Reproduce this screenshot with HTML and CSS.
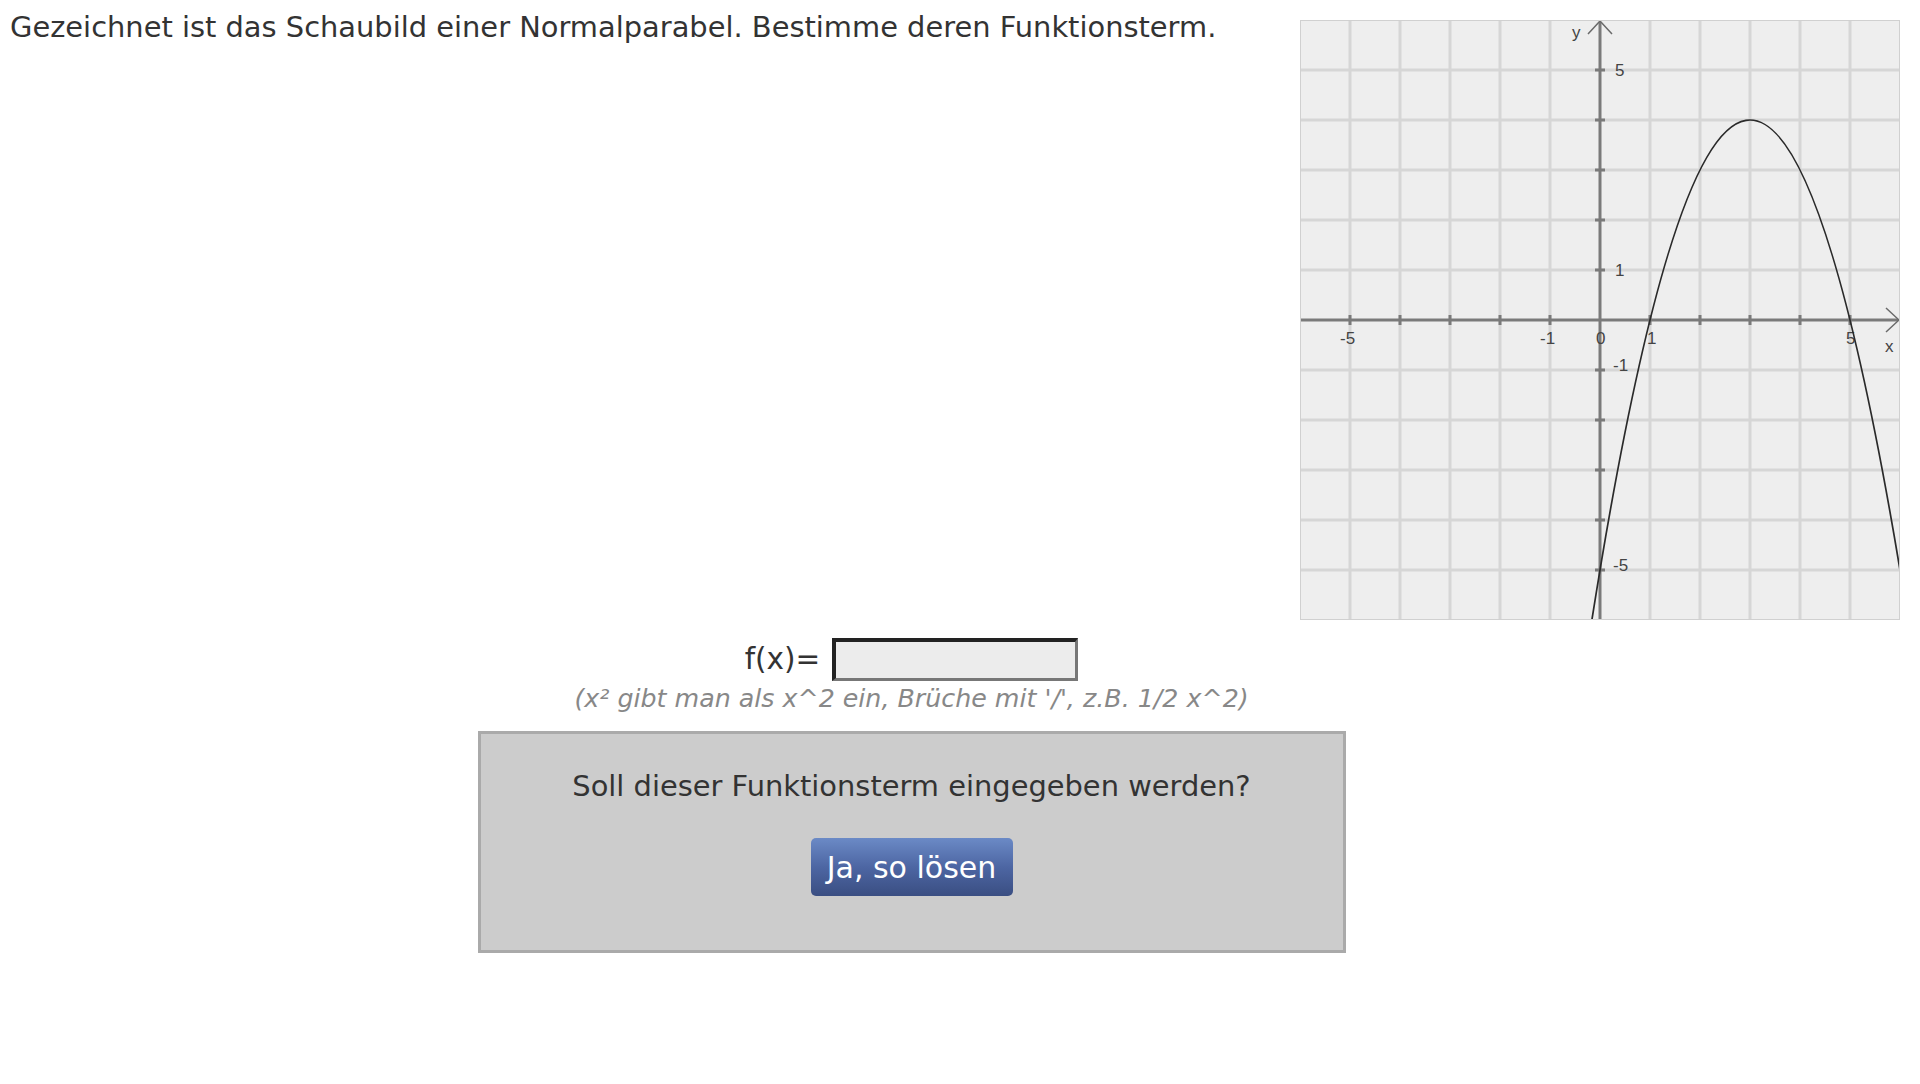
FILE: index.html
```html
<!DOCTYPE html>
<html lang="de">
<head>
<meta charset="utf-8">
<title>Normalparabel</title>
<link rel="stylesheet" href="styles.css">
</head>
<body>
<div class="page">
  <div class="top">
    <p class="task">Gezeichnet ist das Schaubild einer Normalparabel. Bestimme deren Funktionsterm.</p>
    <div class="graph">
      <svg width="600" height="600" viewBox="0 0 600 600" xmlns="http://www.w3.org/2000/svg">
        <rect x="0" y="0" width="600" height="600" fill="#eeeeee"/>
        <g stroke="#d6d6d6" stroke-width="3">
          <line x1="50" y1="0" x2="50" y2="600"/>
          <line x1="100" y1="0" x2="100" y2="600"/>
          <line x1="150" y1="0" x2="150" y2="600"/>
          <line x1="200" y1="0" x2="200" y2="600"/>
          <line x1="250" y1="0" x2="250" y2="600"/>
          <line x1="350" y1="0" x2="350" y2="600"/>
          <line x1="400" y1="0" x2="400" y2="600"/>
          <line x1="450" y1="0" x2="450" y2="600"/>
          <line x1="500" y1="0" x2="500" y2="600"/>
          <line x1="550" y1="0" x2="550" y2="600"/>
          <line x1="0" y1="50" x2="600" y2="50"/>
          <line x1="0" y1="100" x2="600" y2="100"/>
          <line x1="0" y1="150" x2="600" y2="150"/>
          <line x1="0" y1="200" x2="600" y2="200"/>
          <line x1="0" y1="250" x2="600" y2="250"/>
          <line x1="0" y1="350" x2="600" y2="350"/>
          <line x1="0" y1="400" x2="600" y2="400"/>
          <line x1="0" y1="450" x2="600" y2="450"/>
          <line x1="0" y1="500" x2="600" y2="500"/>
          <line x1="0" y1="550" x2="600" y2="550"/>
        </g>
        <g stroke="#7a7a7a" stroke-width="3">
          <line x1="0" y1="300" x2="598" y2="300"/>
          <line x1="300" y1="2" x2="300" y2="600"/>
        </g>
        <g stroke="#7a7a7a" stroke-width="3">
          <line x1="50" y1="295" x2="50" y2="305"/>
          <line x1="100" y1="295" x2="100" y2="305"/>
          <line x1="150" y1="295" x2="150" y2="305"/>
          <line x1="200" y1="295" x2="200" y2="305"/>
          <line x1="250" y1="295" x2="250" y2="305"/>
          <line x1="350" y1="295" x2="350" y2="305"/>
          <line x1="400" y1="295" x2="400" y2="305"/>
          <line x1="450" y1="295" x2="450" y2="305"/>
          <line x1="500" y1="295" x2="500" y2="305"/>
          <line x1="550" y1="295" x2="550" y2="305"/>
          <line x1="295" y1="50" x2="305" y2="50"/>
          <line x1="295" y1="100" x2="305" y2="100"/>
          <line x1="295" y1="150" x2="305" y2="150"/>
          <line x1="295" y1="200" x2="305" y2="200"/>
          <line x1="295" y1="250" x2="305" y2="250"/>
          <line x1="295" y1="350" x2="305" y2="350"/>
          <line x1="295" y1="400" x2="305" y2="400"/>
          <line x1="295" y1="450" x2="305" y2="450"/>
          <line x1="295" y1="500" x2="305" y2="500"/>
          <line x1="295" y1="550" x2="305" y2="550"/>
        </g>
        <g fill="none" stroke="#6a6a6a" stroke-width="1.5">
          <polyline points="288,14 300,1 312,14"/>
          <polyline points="586,288 599,300 586,312"/>
        </g>
        <g font-family="'Liberation Sans', Arial, sans-serif" font-size="17" fill="#444">
          <text x="272" y="18">y</text>
          <text x="315" y="56">5</text>
          <text x="315" y="256">1</text>
          <text x="313" y="351">-1</text>
          <text x="313" y="551">-5</text>
          <text x="40" y="324">-5</text>
          <text x="240" y="324">-1</text>
          <text x="296" y="324">0</text>
          <text x="347" y="324">1</text>
          <text x="546" y="324">5</text>
          <text x="585" y="332">x</text>
        </g>
        <path d="M291.89 600 Q445.94 -374.35 600 550" fill="none" stroke="#2a2a2a" stroke-width="1.7"/>
        <rect x="0.5" y="0.5" width="599" height="599" fill="none" stroke="#d0d0d0" stroke-width="1"/>
      </svg>
    </div>
  </div>
  <div class="answer">
    <div class="input-row">
      <label class="fx" for="term">f(x)=</label>
      <input id="term" class="term" type="text">
    </div>
    <p class="hint">(x² gibt man als x^2 ein, Brüche mit '/', z.B. 1/2 x^2)</p>
    <div class="confirm">
      <p class="question">Soll dieser Funktionsterm eingegeben werden?</p>
      <button class="solve" type="button">Ja, so lösen</button>
    </div>
  </div>
</div>
</body>
</html>
```
FILE: styles.css
```css
html, body {
  margin: 0;
  padding: 0;
  background: #ffffff;
}

body {
  font-family: "DejaVu Sans", Verdana, sans-serif;
  color: #333333;
}

.page {
  width: 1920px;
  padding: 0 20px 0 10px;
  box-sizing: border-box;
}

.top {
  display: flex;
  justify-content: space-between;
  align-items: flex-start;
}

.task {
  margin: 9px 0 0 0;
  font-size: 28.9px;
  line-height: 36px;
  white-space: nowrap;
}

.graph {
  margin-top: 20px;
  width: 600px;
  height: 600px;
  flex-shrink: 0;
}

.graph svg {
  display: block;
}

.answer {
  width: 1803px;
  margin-top: 18px;
  display: flex;
  flex-direction: column;
  align-items: center;
}

.input-row {
  display: flex;
  align-items: center;
  gap: 12px;
}

.fx {
  font-size: 29.5px;
  line-height: 43px;
  color: #333;
}

.term {
  width: 246px;
  height: 43px;
  box-sizing: border-box;
  margin: 0;
  padding: 0 6px;
  background: #ececec;
  border-style: solid;
  border-width: 4px 3px 3px 4px;
  border-color: #222222 #777777 #777777 #222222;
  font-family: "DejaVu Sans", Verdana, sans-serif;
  font-size: 24px;
}

.hint {
  margin: 3px 0 0 0;
  font-size: 25.3px;
  line-height: 30px;
  font-style: italic;
  color: #888888;
}

.confirm {
  margin-top: 17px;
  width: 868px;
  height: 222px;
  box-sizing: border-box;
  background: #cccccc;
  border: 3px solid #aaaaaa;
  display: flex;
  flex-direction: column;
  align-items: center;
}

.question {
  margin: 34px 0 0 0;
  font-size: 28.9px;
  line-height: 36px;
  color: #333;
}

.solve {
  margin-top: 34px;
  width: 202px;
  height: 58px;
  border: none;
  border-radius: 5px;
  background: linear-gradient(to bottom, #6b8ac6 0%, #4d66a3 50%, #3a4e82 100%);
  color: #ffffff;
  font-family: "DejaVu Sans", Verdana, sans-serif;
  font-size: 30px;
  padding: 0;
  cursor: pointer;
}
```
